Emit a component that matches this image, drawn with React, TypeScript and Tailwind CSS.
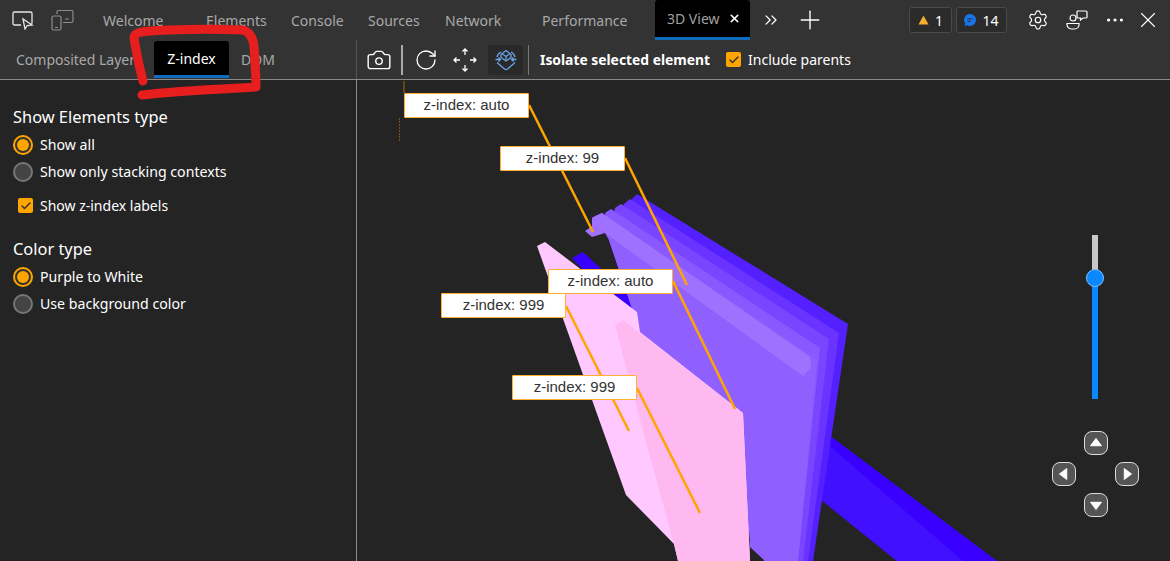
import { Camera, ChevronsRight, Check, Ellipsis, Plus, RotateCw, Settings, X } from "lucide-react";

const font = "font-['Noto_Sans','Open_Sans',sans-serif]";

function Radio({ label, on }: { label: string; on?: boolean }) {
  return (
    <div className="flex h-[27px] items-center">
      {on ? (
        <span className="flex h-5 w-5 items-center justify-center rounded-full border-2 border-[#ffa500] bg-[#333]">
          <span className="h-3 w-3 rounded-full bg-[#ffa500]" />
        </span>
      ) : (
        <span className="h-5 w-5 rounded-full border-2 border-[#777] bg-[#444]" />
      )}
      <span className="ml-[7px] text-[14.15px] text-white">{label}</span>
    </div>
  );
}

function Checkbox({ label }: { label: string }) {
  return (
    <div className="flex items-center">
      <span className="flex h-[15px] w-[15px] items-center justify-center rounded-[2px] bg-[#ffa500]">
        <Check size={12} strokeWidth={3} className="text-[#333]" />
      </span>
      <span className="ml-[7px] text-[14px] text-white">{label}</span>
    </div>
  );
}

function Label({ text, className }: { text: string; className: string }) {
  return (
    <div
      className={`absolute flex h-[25px] w-[125px] items-center justify-center rounded-[1px] border-[1.5px] border-[#ffb030] bg-white font-['Liberation_Sans',sans-serif] text-[15px] text-[#333] ${className}`}
    >
      {text}
    </div>
  );
}

function Arrow({ dir, className }: { dir: "up" | "down" | "left" | "right"; className: string }) {
  const points = {
    up: "12,7 18,15 6,15",
    down: "12,17 18,9 6,9",
    left: "7,12 15,6 15,18",
    right: "17,12 9,6 9,18",
  }[dir];
  return (
    <div className={`absolute h-6 w-6 rounded-lg border border-[#ddd] bg-[#555] ${className}`}>
      <svg viewBox="0 0 24 24" className="h-full w-full">
        <polygon points={points} fill="#fff" stroke="#fff" strokeLinejoin="round" />
      </svg>
    </div>
  );
}

function Scene() {
  return (
    <svg viewBox="357 81 813 480" className="absolute inset-0 h-full w-full">
      {/* blue bar behind the planes */}
      <polygon points="572,258 583,252 640,305 640,330" fill="#3a00ff" />
      <polygon points="825,432 997,561 897,561 815,495" fill="#3a00ff" />
      <polygon points="825,442 963,561 897,561 815,495" fill="#4010ff" />
      {/* purple planes, back to front */}
      <polygon points="637,194 848,324 813,561 765,561 640,332 609,240 632,199" fill="#5520ff" />
      <polygon points="630,199 839,333 808,561 765,561 640,332 609,240 624,204" fill="#6a33ff" />
      <polygon points="621,204 829,339 803,561 765,561 640,332 609,240 615,208" fill="#7a45ff" />
      <polygon points="611,209 820,348 798,561 765,561 640,332 609,240 605,213" fill="#8a58ff" />
      <polygon points="602,213 595,216 592,218 592,228 605,233 610,242 640,332 743,413 750,547 765,561 798,561 817,360" fill="#9060ff" />
      <polygon points="592,218 602,213 810,357 811,368 803,376 605,233 592,228" fill="#a070ff" />
      <polygon points="585,231 591,227 605,233 592,237" fill="#a070ff" />
      {/* pink planes */}
      <polygon points="537,246 545,242 637,312 640,332 743,413 750,561 678,561 674,544 626,495" fill="#ffc8ff" />
      <polygon points="615,325 623,320 743,413 750,561 678,561 674,544 640,420" fill="#ffb9f1" />
      {/* leader lines */}
      <g stroke="#ffa500" strokeWidth="2.5" fill="none">
        <line x1="529" y1="105" x2="593" y2="232" />
        <line x1="625" y1="158" x2="687" y2="285" />
        <line x1="673" y1="281" x2="735" y2="409" />
        <line x1="566" y1="306" x2="629" y2="431" />
        <line x1="637" y1="388" x2="700" y2="513" />
      </g>
      <line x1="404" y1="81" x2="404" y2="93" stroke="#a06a10" />
      <line x1="399.5" y1="118" x2="399.5" y2="141" stroke="#7a5214" strokeDasharray="2 1" />
    </svg>
  );
}

export default function App() {
  return (
    <div className={`relative flex h-[561px] w-[1170px] flex-col overflow-hidden bg-[#242424] ${font}`}>
      {/* top bar */}
      <div className="flex h-10 items-center bg-[#333] text-[14px] text-[#a9a9a9]">
        <div className="flex w-[103px] items-center pl-3">
          <svg width="22" height="20" viewBox="0 0 22 20" fill="none" stroke="#e6e6e6" strokeWidth="1.3">
            <path d="M9 15H2.500A1.500 1.500 0 0 1 1 13.500V3.500A1.500 1.500 0 0 1 2.500 2h16A1.500 1.500 0 0 1 20 3.500V13a1.500 1.500 0 0 1-1.500 1.500" />
            <path d="M11 9l2 10 2.200-3.500 4.800-.5z" fill="#333" />
          </svg>
          <svg width="24" height="22" viewBox="0 0 24 22" fill="none" stroke="#8d8d8d" strokeWidth="1.2" className="ml-[17px]">
            <path d="M6 5V3a1.500 1.500 0 0 1 1.500-1.500h13A1.500 1.500 0 0 1 22 3v9a1.500 1.500 0 0 1-1.500 1.500H12" />
            <rect x="1" y="7" width="9" height="14" rx="1.500" />
            <path d="M4 18.500h3M14 10h4" />
          </svg>
        </div>
        <span className="w-[103px]">Welcome</span>
        <span className="w-[85px]">Elements</span>
        <span className="w-[77px]">Console</span>
        <span className="w-[77px]">Sources</span>
        <span className="w-[97px]">Network</span>
        <span className="w-[113px]">Performance</span>
        <div className="flex h-10 w-[95px] items-center rounded-t-[3px] border-b-[3px] border-[#0f6cbd] bg-black pl-[12px]">
          <span className="text-[#a0a0a0]">3D View</span>
          <X size={13} strokeWidth={3} className="ml-[8px] text-white" />
        </div>
        <ChevronsRight size={20} strokeWidth={1.5} className="ml-[11px] text-white" />
        <Plus size={30} strokeWidth={1.1} className="ml-[14px] text-white" />
        <div className="ml-[84px] flex h-[26px] w-[43px] items-center justify-center gap-[6px] rounded-[3px] border border-[#4a4a4a] bg-[#2b2b2b] text-white">
          <svg width="11" height="10" viewBox="0 0 11 10">
            <polygon points="5.500,0.500 10.500,9.500 0.500,9.500" fill="#f7ad2e" />
          </svg>
          <span>1</span>
        </div>
        <div className="ml-1 flex h-[26px] w-[51px] items-center justify-center gap-[6px] rounded-[3px] border border-[#4a4a4a] bg-[#2b2b2b] text-white">
          <svg width="12" height="12" viewBox="0 0 12 12">
            <path d="M6 0a6 6 0 1 1-3 11.200L0.500 12l.7-2.600A6 6 0 0 1 6 0z" fill="#1a73e8" />
            <path d="M3.500 5h5M3.500 7.500h3" stroke="#2b2b2b" />
          </svg>
          <span>14</span>
        </div>
        <Settings size={22} strokeWidth={1.3} className="ml-[20px] text-white" />
        <svg width="22" height="22" viewBox="0 0 22 22" fill="none" stroke="#fff" strokeWidth="1.200" className="ml-[17px]">
          <circle cx="7" cy="9" r="3" />
          <path d="M1 14.500h12v1a4.500 4.500 0 0 1-4.500 4.500h-3A4.500 4.500 0 0 1 1 15.500z" />
          <path d="M11 3a1 1 0 0 1 1-1h8a1 1 0 0 1 1 1v5a1 1 0 0 1-1 1h-3l-2.500 2V9H12a1 1 0 0 1-1-1z" />
        </svg>
        <Ellipsis size={22} strokeWidth={1.500} className="ml-[16px] text-white" />
        <X size={26} strokeWidth={1} className="ml-[9px] text-white" />
      </div>

      {/* second row */}
      <div className="flex h-10 border-b-[1.500px] border-[#8a8a8a] bg-[#333] text-[14px]">
        <div className="flex w-[356px] items-center">
          <span className="ml-4 w-[138px] overflow-hidden whitespace-nowrap text-[#a9a9a9]">Composited Layers</span>
          <span className="flex h-[37px] w-[75px] items-center justify-center rounded-t-[3px] border-b-[3px] border-[#0f6cbd] bg-black text-white">
            Z-index
          </span>
          <span className="ml-3 text-[#a9a9a9]">DOM</span>
        </div>
        <div className="flex flex-1 items-center border-l border-[#555] text-white">
          <Camera size={26} strokeWidth={1.300} className="ml-[9px]" />
          <span className="ml-[9px] h-[30px] w-[2px] bg-[#aaa]" />
          <RotateCw size={24} strokeWidth={1.300} className="ml-[11px]" />
          <svg width="24" height="24" viewBox="0 0 24 24" fill="none" stroke="#fff" strokeWidth="1.300" className="ml-[15px]">
            <path d="M12 1v6M9.500 3.500L12 1l2.500 2.500M12 17v6M9.500 20.500L12 23l2.500-2.500M1 12h6M3.500 9.500L1 12l2.500 2.500M17 12h6M20.500 9.500L23 12l-2.500 2.500" />
          </svg>
          <span className="ml-[11px] flex h-[30px] w-[35px] items-center justify-center rounded-[3px] bg-[#292929]">
            <svg width="24" height="24" viewBox="0 0 24 24" fill="none" stroke="#6aa5e8" strokeWidth="1.300">
              <path d="M7 6.500L12 2.500l5 4v3L12 13 7 9.500z" />
              <path d="M8.500 6l3.500 2.500L15.500 6M12 8.500V12" />
              <path d="M1.500 11.500h5M4.500 9.500l2 2-2 2M22.500 11.500h-5M19.500 9.500l-2 2 2 2" />
              <path d="M3 14.500l7.500 6.500a2.500 2.500 0 0 0 3 0l7.500-6.500" />
              <path d="M3 9C3.500 6.500 5 5 7 4M21 9c-.5-2.500-2-4-4-5" />
            </svg>
          </span>
          <span className="ml-[5px] h-[30px] w-px bg-[#777]" />
          <span className="ml-[11px] pt-[2px] text-[13.85px] font-bold">Isolate selected element</span>
          <div className="ml-[16px]">
            <Checkbox label="Include parents" />
          </div>
        </div>
      </div>

      {/* body */}
      <div className="flex flex-1">
        <div className="w-[356px] px-[13px] pt-[25px] text-white">
          <div className="text-[16.4px] leading-[24px]">Show Elements type</div>
          <div className="mt-[2px]">
            <Radio label="Show all" on />
            <Radio label="Show only stacking contexts" />
          </div>
          <div className="ml-[5px] mt-[10px]">
            <Checkbox label="Show z-index labels" />
          </div>
          <div className="mt-[21px] text-[16.4px] leading-[24px]">Color type</div>
          <div className="mt-[2px]">
            <Radio label="Purple to White" on />
            <Radio label="Use background color" />
          </div>
        </div>
        <div className="flex-1 border-l-[1.500px] border-[#8a8a8a]" />
      </div>

      {/* 3D canvas contents */}
      <div className="absolute left-[357px] top-[81px] h-[480px] w-[813px]">
        <Scene />
        <Label text="z-index: auto" className="left-[47px] top-[12px]" />
        <Label text="z-index: 99" className="left-[143px] top-[65px]" />
        <Label text="z-index: auto" className="left-[191px] top-[188px]" />
        <Label text="z-index: 999" className="left-[84px] top-[212px]" />
        <Label text="z-index: 999" className="left-[155px] top-[294px]" />
        <div className="absolute left-[735px] top-[154px] h-[164px] w-[6px] bg-[#0b87ff]">
          <div className="h-[43px] bg-[#c8c8c8]" />
        </div>
        <div className="absolute left-[729px] top-[188px] h-[18px] w-[18px] rounded-full border border-[#7fbfff] bg-[#0b87ff]" />
        <Arrow dir="up" className="left-[727px] top-[350px]" />
        <Arrow dir="left" className="left-[695px] top-[381px]" />
        <Arrow dir="right" className="left-[758px] top-[381px]" />
        <Arrow dir="down" className="left-[727px] top-[412px]" />
      </div>

      {/* red marker scribble */}
      <svg viewBox="0 0 1170 561" className="pointer-events-none absolute inset-0 h-full w-full">
        <path
          d="M143 81 C139 66 136 50 134 38 C134 33 140 32 150 31 C180 29 215 29 243 30 C250 32 253 38 254 46 C255 60 256 74 256 87 C220 89 175 91 142 95"
          fill="none"
          stroke="#e61e1e"
          strokeWidth="9"
          strokeLinecap="round"
          strokeLinejoin="round"
        />
      </svg>
    </div>
  );
}
